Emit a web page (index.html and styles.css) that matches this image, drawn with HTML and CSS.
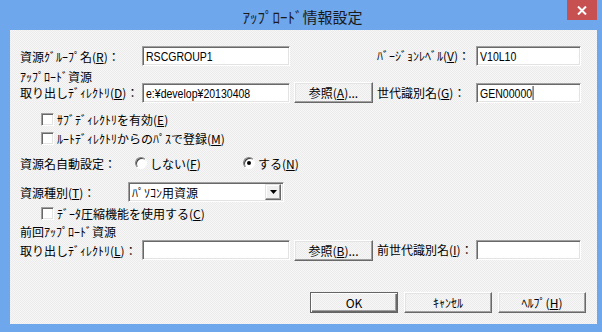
FILE: index.html
```html
<!DOCTYPE html>
<html lang="ja">
<head>
    <meta charset="UTF-8">
    <title>ｱｯﾌﾟﾛｰﾄﾞ情報設定</title>
    <link rel="stylesheet" href="styles.css">
</head>
<body>
    <div class="window">
        <div class="titlebar">
            <span class="title">ｱｯﾌﾟﾛｰﾄﾞ情報設定</span>
            <div class="close">
                <svg width="10" height="9" viewBox="0 0 10 9"><path d="M1 0.5 L9 8.5 M9 0.5 L1 8.5" stroke="#fff" stroke-width="2"/></svg>
            </div>
        </div>
        <div class="client">
            <!-- group name / version -->
            <div class="row">
                <span class="lbl">資源ｸﾞﾙｰﾌﾟ名(<u>R</u>)：</span>
                <div class="edit w148"><span class="val">RSCGROUP1</span></div>
                <span class="lbl-r gap87">ﾊﾞｰｼﾞｮﾝﾚﾍﾞﾙ(<u>V</u>)：</span>
                <div class="edit w105"><span class="val">V10L10</span></div>
            </div>
            <!-- upload source dir -->
            <div class="row2">
                <div class="lbl two">
                    <div>ｱｯﾌﾟﾛｰﾄﾞ資源</div>
                    <div>取り出しﾃﾞｨﾚｸﾄﾘ(<u>D</u>)：</div>
                </div>
                <div class="edit w148"><span class="val">e:¥develop¥20130408</span></div>
                <button class="btn ref">参照(<u>A</u>)...</button>
                <span class="lbl-r">世代識別名(<u>G</u>)：</span>
                <div class="edit w105"><span class="val">GEN00000<span class="caret"></span></span></div>
            </div>
            <label class="chk c1"><span class="box"></span>ｻﾌﾞﾃﾞｨﾚｸﾄﾘを有効(<u>E</u>)</label>
            <label class="chk c2"><span class="box"></span>ﾙｰﾄﾃﾞｨﾚｸﾄﾘからのﾊﾟｽで登録(<u>M</u>)</label>
            <!-- auto naming -->
            <div class="radios">
                <span class="lbl-radio">資源名自動設定：</span>
                <label class="opt w108"><span class="radio"></span>しない(<u>F</u>)</label>
                <label class="opt"><span class="radio on"></span>する(<u>N</u>)</label>
            </div>
            <div class="row combo-row">
                <span class="lbl-combo">資源種別(<u>T</u>)：</span>
                <div class="combo">
                    <span>ﾊﾟｿｺﾝ用資源</span>
                    <span class="drop"><svg width="7" height="4" viewBox="0 0 7 4"><path d="M0 0 H7 L3.5 4 Z" fill="#000"/></svg></span>
                </div>
            </div>
            <label class="chk c3"><span class="box"></span>ﾃﾞｰﾀ圧縮機能を使用する(<u>C</u>)</label>
            <!-- previous upload -->
            <div class="prev">前回ｱｯﾌﾟﾛｰﾄﾞ資源</div>
            <div class="row">
                <span class="lbl">取り出しﾃﾞｨﾚｸﾄﾘ(<u>L</u>)：</span>
                <div class="edit w148"></div>
                <button class="btn ref">参照(<u>B</u>)...</button>
                <span class="lbl-r">前世代識別名(<u>I</u>)：</span>
                <div class="edit w105"></div>
            </div>
            <div class="actions">
                <button class="btn act default">OK</button>
                <button class="btn act">ｷｬﾝｾﾙ</button>
                <button class="btn act">ﾍﾙﾌﾟ(<u>H</u>)</button>
            </div>
        </div>
    </div>
</body>
</html>
```

FILE: styles.css
```css
body{
    margin: 0;
    font-family: "Noto Sans CJK JP", sans-serif;
    font-size: 12px;
    color: #000;
}
.window{
    width: 602px;
    height: 332px;
    background-color: #6ea7eb;
}
.titlebar{
    height: 30px;
    position: relative;
    display: flex;
    justify-content: center;
    align-items: center;
}
.title{
    font-size: 15px;
    color: #1a1a1a;
    padding-top: 2px;
    padding-left: 3px;
}
.close{
    position: absolute;
    top: 0;
    right: 5px;
    width: 30px;
    height: 20px;
    background-color: #c75050;
    display: flex;
    justify-content: center;
    align-items: center;
}
.client{
    margin-left: 10px;
    width: 587px;
    height: 294px;
    box-sizing: border-box;
    padding: 16px 0 0 10px;
    background: repeating-conic-gradient(#f7f7f7 0 25%, #ebebeb 0 50%) 0 0 / 2px 2px;
}
.row{
    display: flex;
    align-items: center;
    height: 20px;
}
.row2{
    display: flex;
    align-items: flex-end;
    margin-top: 3px;
}
.lbl{
    width: 122px;
    white-space: nowrap;
}
.two{
    line-height: 16px;
    margin-bottom: 2px;
}
.lbl-r{
    width: 99px;
    margin-left: 4px;
    white-space: nowrap;
    line-height: 20px;
}
.gap87{
    margin-left: 87px;
}
.edit{
    height: 20px;
    box-sizing: border-box;
    background-color: #fff;
    border: 1px solid;
    border-color: #a0a0a0 #fff #fff #a0a0a0;
    box-shadow: inset 1px 1px 0 #696969, inset -1px -1px 0 #e3e3e3;
    padding: 1px 0 0 3px;
    font-family: "Liberation Sans", sans-serif;
    font-size: 13px;
    line-height: 17px;
    white-space: nowrap;
}
/* the dialog font is a narrow bitmap one */
.val{
    display: inline-block;
    transform: scaleX(0.81);
    transform-origin: left center;
}
.w148{
    width: 148px;
}
.w105{
    width: 105px;
}
.caret{
    display: inline-block;
    width: 1px;
    height: 14px;
    margin-left: 1px;
    background-color: #000;
    vertical-align: -2px;
}
.btn{
    font-family: "Noto Sans CJK JP", sans-serif;
    font-size: 12px;
    color: #000;
    padding: 0;
    box-sizing: border-box;
    background: repeating-conic-gradient(#f7f7f7 0 25%, #ebebeb 0 50%) 0 0 / 2px 2px;
    border: 1px solid;
    border-color: #fff #696969 #696969 #fff;
    box-shadow: inset -1px -1px 0 #a0a0a0, inset 1px 1px 0 #e3e3e3;
}
.ref{
    width: 79px;
    height: 21px;
    margin-left: 4px;
}
.chk{
    display: flex;
    align-items: center;
    height: 14px;
    padding-left: 21px;
    white-space: nowrap;
}
.c1{
    margin-top: 9px;
}
.c2{
    margin-top: 5px;
}
.c3{
    margin-top: 4px;
}
.box{
    width: 13px;
    height: 13px;
    box-sizing: border-box;
    background-color: #fff;
    border: 1px solid;
    border-color: #a0a0a0 #fff #fff #a0a0a0;
    box-shadow: inset 1px 1px 0 #696969, inset -1px -1px 0 #e3e3e3;
    margin-right: 3px;
}
.radios{
    display: flex;
    align-items: center;
    height: 16px;
    margin-top: 10px;
}
.lbl-radio{
    width: 115px;
}
.opt{
    display: flex;
    align-items: center;
}
.w108{
    width: 108px;
}
.radio{
    width: 12px;
    height: 12px;
    box-sizing: border-box;
    border-radius: 50%;
    background-color: #fff;
    border: 1px solid;
    border-color: #808080 #fff #fff #808080;
    box-shadow: inset 1px 1px 0 #404040;
    margin-right: 3px;
    display: flex;
    justify-content: center;
    align-items: center;
}
.radio.on::after{
    content: "";
    width: 4px;
    height: 4px;
    border-radius: 50%;
    background-color: #000;
}
.combo-row{
    margin-top: 11px;
}
.lbl-combo{
    width: 108px;
}
.combo{
    width: 156px;
    height: 20px;
    box-sizing: border-box;
    background-color: #fff;
    border: 1px solid;
    border-color: #a0a0a0 #fff #fff #a0a0a0;
    box-shadow: inset 1px 1px 0 #696969, inset -1px -1px 0 #e3e3e3;
    display: flex;
    align-items: center;
    justify-content: space-between;
    padding: 1px 2px 1px 3px;
}
.drop{
    width: 16px;
    height: 16px;
    box-sizing: border-box;
    background-color: #f0f0f0;
    border: 1px solid;
    border-color: #e3e3e3 #696969 #696969 #e3e3e3;
    box-shadow: inset -1px -1px 0 #a0a0a0, inset 1px 1px 0 #fff;
    display: flex;
    justify-content: center;
    align-items: center;
}
.prev{
    margin-top: 4px;
    line-height: 16px;
}
.actions{
    display: flex;
    gap: 6px;
    margin-top: 32px;
    padding-left: 290px;
}
.act{
    width: 88px;
    height: 21px;
}
.default{
    border-color: #646464;
    box-shadow: inset 1px 1px 0 #fff, inset -1px -1px 0 #696969, inset -2px -2px 0 #a0a0a0;
}
```
